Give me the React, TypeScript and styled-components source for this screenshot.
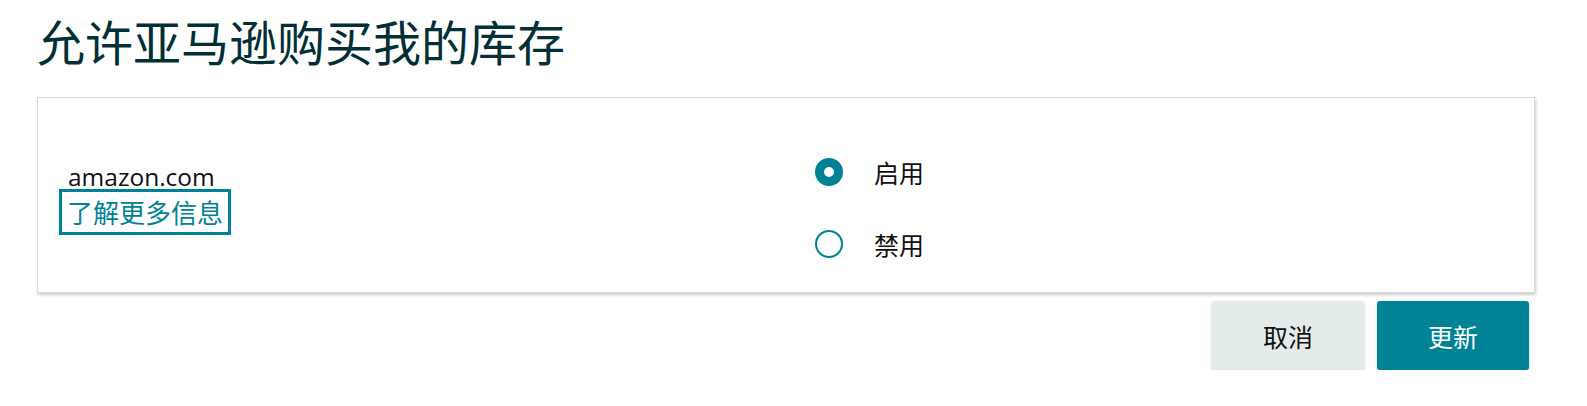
import React from "react";
import styled, { createGlobalStyle } from "styled-components";

const Global = createGlobalStyle`
  html, body { margin: 0; padding: 0; background: #ffffff; }
  body { font-family: "Noto Sans", "Noto Sans CJK SC", sans-serif; color: #0f1111; }
`;

const Page = styled.div`
  width: 1587px;
  padding: 0 52px 0 37px;
  box-sizing: border-box;
`;

const Title = styled.h1`
  margin: 0;
  padding-top: 10px;
  height: 97px;
  box-sizing: border-box;
  font-size: 48px;
  line-height: 60px;
  font-weight: 400;
  color: #002f36;
  font-family: "Noto Sans CJK SC", sans-serif;
`;

const Card = styled.section`
  width: 1498px;
  height: 196px;
  box-sizing: border-box;
  border: 1px solid #d5dbdb;
  box-shadow: 1px 2px 3px rgba(0, 0, 0, 0.2);
  background: #fff;
  display: grid;
  grid-template-columns: 749px 1fr;
`;

const Info = styled.div`
  display: flex;
  flex-direction: column;
  justify-content: flex-start;
  align-items: flex-start;
  padding: 67px 0 0 21px;
`;

const Domain = styled.div`
  font-family: "Open Sans", "Noto Sans CJK SC", sans-serif;
  font-size: 24.5px;
  line-height: 24px;
  color: #0f1111;
  padding-left: 9px;
`;

const LearnMore = styled.a`
  display: inline-block;
  border: 3px solid #008296;
  padding: 0 5px;
  font-size: 26px;
  line-height: 40px;
  color: #008296;
  text-decoration: none;
  font-family: "Noto Sans CJK SC", sans-serif;
`;

const Options = styled.div`
  display: flex;
  flex-direction: column;
  justify-content: flex-start;
  gap: 44px;
  padding: 60px 0 0 28px;
`;

const Option = styled.label`
  display: flex;
  align-items: center;
  gap: 31px;
  font-size: 25px;
  line-height: 28px;
  color: #0f1111;
  font-family: "Noto Sans CJK SC", sans-serif;
`;

const Radio = styled.span<{ $checked?: boolean }>`
  width: 28px;
  height: 28px;
  border-radius: 50%;
  box-sizing: border-box;
  background: #fff;
  border: ${(p) => (p.$checked ? "9px solid #008296" : "2px solid #008296")};
  flex: none;
`;

const Actions = styled.div`
  display: flex;
  justify-content: flex-end;
  gap: 13px;
  width: 1492px;
  margin-top: 8px;
`;

const Button = styled.button<{ $primary?: boolean }>`
  width: 152px;
  height: 69px;
  border: none;
  border-radius: 3px;
  font-family: "Noto Sans CJK SC", sans-serif;
  font-size: 25px;
  background: ${(p) => (p.$primary ? "#008296" : "#e3ebeb")};
  color: ${(p) => (p.$primary ? "#ffffff" : "#0f1111")};
  box-shadow: 0 1px 3px rgba(0, 0, 0, 0.25);
  cursor: pointer;
`;

export default function App() {
  return (
    <>
      <Global />
      <Page>
        <Title>允许亚马逊购买我的库存</Title>
        <Card>
          <Info>
            <Domain>amazon.com</Domain>
            <LearnMore href="#">了解更多信息</LearnMore>
          </Info>
          <Options>
            <Option>
              <Radio $checked />
              启用
            </Option>
            <Option>
              <Radio />
              禁用
            </Option>
          </Options>
        </Card>
        <Actions>
          <Button>取消</Button>
          <Button $primary>更新</Button>
        </Actions>
      </Page>
    </>
  );
}
